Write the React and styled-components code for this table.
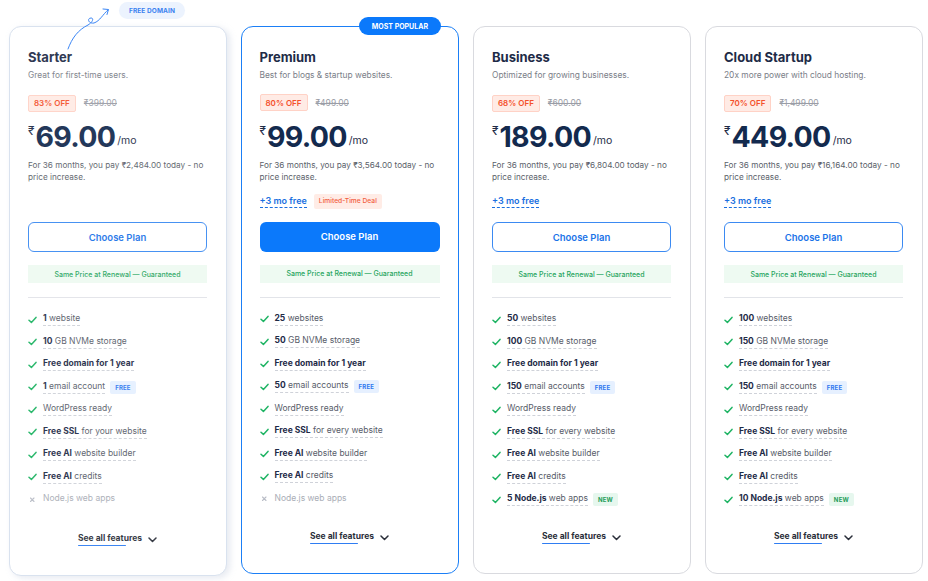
import React from 'react'
import styled, { createGlobalStyle, css } from 'styled-components'

const GlobalStyle = createGlobalStyle`
  html, body {
    margin: 0;
    padding: 0;
    background: #ffffff;
    font-family: "Inter", "Noto Sans", sans-serif;
    -webkit-font-smoothing: antialiased;
  }
`

const plans = [
  {
    name: 'Starter',
    blurb: 'Great for first-time users.',
    off: '83% OFF',
    was: '₹399.00',
    price: '69.00',
    total: '₹2,484.00',
    bonus: null,
    outline: true,
    features: [
      [['1', true], [' website']],
      [['10', true], [' GB NVMe storage']],
      [['Free domain for 1 year', true]],
      [['1', true], [' email account']],
      [['WordPress ready']],
      [['Free SSL', true], [' for your website']],
      [['Free AI', true], [' website builder']],
      [['Free AI', true], [' credits']],
      [['Node.js web apps']],
    ],
    tags: { 3: 'free' },
    missing: 8,
  },
  {
    name: 'Premium',
    blurb: 'Best for blogs & startup websites.',
    off: '80% OFF',
    was: '₹499.00',
    price: '99.00',
    total: '₹3,564.00',
    bonus: true,
    deal: true,
    popular: true,
    features: [
      [['25', true], [' websites']],
      [['50', true], [' GB NVMe storage']],
      [['Free domain for 1 year', true]],
      [['50', true], [' email accounts']],
      [['WordPress ready']],
      [['Free SSL', true], [' for every website']],
      [['Free AI', true], [' website builder']],
      [['Free AI', true], [' credits']],
      [['Node.js web apps']],
    ],
    tags: { 3: 'free' },
    missing: 8,
  },
  {
    name: 'Business',
    blurb: 'Optimized for growing businesses.',
    off: '68% OFF',
    was: '₹600.00',
    price: '189.00',
    total: '₹6,804.00',
    bonus: true,
    outline: true,
    features: [
      [['50', true], [' websites']],
      [['100', true], [' GB NVMe storage']],
      [['Free domain for 1 year', true]],
      [['150', true], [' email accounts']],
      [['WordPress ready']],
      [['Free SSL', true], [' for every website']],
      [['Free AI', true], [' website builder']],
      [['Free AI', true], [' credits']],
      [['5 Node.js', true], [' web apps']],
    ],
    tags: { 3: 'free', 8: 'new' },
  },
  {
    name: 'Cloud Startup',
    blurb: '20x more power with cloud hosting.',
    off: '70% OFF',
    was: '₹1,499.00',
    price: '449.00',
    total: '₹16,164.00',
    bonus: true,
    outline: true,
    features: [
      [['100', true], [' websites']],
      [['150', true], [' GB NVMe storage']],
      [['Free domain for 1 year', true]],
      [['150', true], [' email accounts']],
      [['WordPress ready']],
      [['Free SSL', true], [' for every website']],
      [['Free AI', true], [' website builder']],
      [['Free AI', true], [' credits']],
      [['10 Node.js', true], [' web apps']],
    ],
    tags: { 3: 'free', 8: 'new' },
  },
]

const Check = () => (
  <svg width="9" height="8" viewBox="0 0 9 8">
    <path d="M1 4.3 L3.4 6.4 L8 1.4" fill="none" stroke="#1fb464" strokeWidth="1.5" strokeLinecap="round" strokeLinejoin="round" />
  </svg>
)

const Cross = () => (
  <svg width="9" height="8" viewBox="0 0 9 8">
    <path d="M2.5 2 L6 5.5 M6 2 L2.5 5.5" fill="none" stroke="#b9bdc7" strokeWidth="1.1" strokeLinecap="round" />
  </svg>
)

const Chevron = () => (
  <svg width="9" height="6" viewBox="0 0 9 6">
    <path d="M1 1 L4.5 4.5 L8 1" fill="none" stroke="#2b2f3a" strokeWidth="1.5" strokeLinecap="round" strokeLinejoin="round" />
  </svg>
)

// hand-drawn looping arrow pointing at the domain pill
const Arrow = () => (
  <ArrowSvg width="50" height="52" viewBox="0 0 50 52">
    <path
      d="M2 49 C6 38 12 30 22 25 C27 22 28 18 25 18 C21 18 22 24 28 23 C34 21 37 14 42 10"
      fill="none"
      stroke="#3b86f5"
      strokeWidth="1"
      strokeLinecap="round"
    />
    <path d="M37 9 L42.5 9.5 L41 14.5" fill="none" stroke="#3b86f5" strokeWidth="1" strokeLinecap="round" strokeLinejoin="round" />
  </ArrowSvg>
)

const Feature = ({ parts, tag, missing }) => (
  <Row>
    <Mark>{missing ? <Cross /> : <Check />}</Mark>
    <FeatText missing={missing}>
      {parts.map(([text, bold], i) => bold ? <b key={i}>{text}</b> : <span key={i}>{text}</span>)}
    </FeatText>
    {tag && <Tag kind={tag}>{tag === 'free' ? 'FREE' : 'NEW'}</Tag>}
  </Row>
)

const Plan = ({ plan }) => (
  <Card popular={plan.popular} faded={plan.name === 'Starter'}>
    {plan.popular && <Popular>MOST POPULAR</Popular>}
    <Title>{plan.name}</Title>
    <Blurb>{plan.blurb}</Blurb>
    <DealRow>
      <Off>{plan.off}</Off>
      <Was>{plan.was}</Was>
    </DealRow>
    <PriceRow>
      <Rupee>₹</Rupee>
      <Amount>{plan.price}</Amount>
      <Per>/mo</Per>
    </PriceRow>
    <Terms>For 36 months, you pay {plan.total} today - no price increase.</Terms>
    <BonusRow>
      {plan.bonus && <Bonus>+3 mo free</Bonus>}
      {plan.deal && <Limited>Limited-Time Deal</Limited>}
    </BonusRow>
    <Choose outline={plan.outline}>Choose Plan</Choose>
    <Renewal>Same Price at Renewal — Guaranteed</Renewal>
    <Divider />
    <List>
      {plan.features.map((parts, i) => (
        <Feature key={i} parts={parts} tag={plan.tags[i]} missing={plan.missing === i} />
      ))}
    </List>
    <SeeAll>
      <SeeText>See all features</SeeText>
      <Chevron />
    </SeeAll>
  </Card>
)

export default function App() {
  return (
    <>
      <GlobalStyle />
      <Page>
        <Arrow />
        <DomainPill>FREE DOMAIN</DomainPill>
        <Grid>
          {plans.map(p => <Plan key={p.name} plan={p} />)}
        </Grid>
      </Page>
    </>
  )
}

const Page = styled.div`
  position: relative;
  width: 928px;
  height: 581px;
  box-sizing: border-box;
  padding: 26px 0 0 9px;
  overflow: hidden;
`

const ArrowSvg = styled.svg`
  position: absolute;
  left: 66px;
  top: 0;
  z-index: 2;
`

const DomainPill = styled.div`
  position: absolute;
  left: 119px;
  top: 2px;
  width: 66px;
  height: 17px;
  border-radius: 9px;
  background: #ecf3fe;
  color: #3c82f0;
  font-size: 6.5px;
  font-weight: 700;
  display: flex;
  align-items: center;
  justify-content: center;
  letter-spacing: 0.1px;
`

const Grid = styled.div`
  display: grid;
  grid-template-columns: repeat(4, 218px);
  column-gap: 14px;
  align-items: start;
`

const Card = styled.div`
  position: relative;
  box-sizing: border-box;
  height: 548px;
  padding: 22px 19px 0 18px;
  border-radius: 12px;
  background: #fff;
  border: 1px solid #d9dadf;
  display: flex;
  flex-direction: column;
  ${({ popular }) => popular && css`
    border: 1.5px solid #1b7ff6;
    padding: 21.5px 18.5px 0 17.5px;
  `}
  ${({ faded }) => faded && css`
    height: 550px;
    border-color: #d7e0ee;
    box-shadow: 3px 2px 6px rgba(180, 192, 215, 0.35);
    opacity: 0.93;
  `}
`

const Popular = styled.div`
  position: absolute;
  right: 17px;
  top: -10px;
  height: 18px;
  padding: 0 13px;
  border-radius: 9px;
  background: #0b79fb;
  color: #fff;
  font-size: 7px;
  font-weight: 700;
  display: flex;
  align-items: center;
`

const Title = styled.div`
  font-size: 13px;
  line-height: 17px;
  font-weight: 700;
  color: #1e2b47;
`

const Blurb = styled.div`
  margin-top: 3px;
  font-size: 8.4px;
  line-height: 12px;
  color: #7a7e88;
`

const DealRow = styled.div`
  margin-top: 13px;
  display: flex;
  align-items: center;
  gap: 8px;
  height: 18px;
`

const Off = styled.div`
  height: 17px;
  box-sizing: border-box;
  padding: 0 5px;
  border: 1px solid #ffd2c6;
  background: #ffebe5;
  border-radius: 2px;
  color: #f4512c;
  font-size: 8px;
  font-weight: 600;
  display: flex;
  align-items: center;
`

const Was = styled.div`
  font-size: 8.5px;
  color: #9a9da6;
  text-decoration: line-through;
`

const PriceRow = styled.div`
  margin-top: 8px;
  display: flex;
  align-items: flex-end;
  height: 33px;
`

const Rupee = styled.span`
  align-self: flex-start;
  margin-top: 3px;
  font-size: 12px;
  color: #1e2b47;
  margin-right: 1px;
`

const Amount = styled.span`
  font-size: 28.5px;
  line-height: 33px;
  font-weight: 700;
  letter-spacing: -0.7px;
  color: #132a4e;
`

const Per = styled.span`
  font-size: 10.5px;
  line-height: 12px;
  margin: 0 0 6px 2px;
  color: #1e2b47;
`

const Terms = styled.div`
  margin-top: 6px;
  font-size: 8.2px;
  line-height: 12px;
  color: #5b5f6a;
  width: 180px;
`

const BonusRow = styled.div`
  margin-top: 10px;
  height: 17px;
  display: flex;
  align-items: center;
  gap: 7px;
`

const Bonus = styled.span`
  font-size: 9px;
  font-weight: 600;
  color: #1a6fe0;
  border-bottom: 1px dashed #1a6fe0;
  line-height: 12px;
`

const Limited = styled.span`
  height: 15px;
  padding: 0 5px;
  border-radius: 2px;
  background: #ffece6;
  color: #f2603f;
  font-size: 6.7px;
  font-weight: 500;
  display: flex;
  align-items: center;
`

const Choose = styled.div`
  margin-top: 12px;
  height: 30px;
  box-sizing: border-box;
  border-radius: 6px;
  display: flex;
  align-items: center;
  justify-content: center;
  font-size: 9.5px;
  font-weight: 600;
  background: #0b79fb;
  color: #fff;
  ${({ outline }) => outline && css`
    background: #fff;
    color: #1a73e8;
    border: 1.5px solid #3b8af2;
  `}
`

const Renewal = styled.div`
  margin-top: 13px;
  height: 18px;
  background: #eefaf2;
  color: #27a55e;
  font-size: 7px;
  font-weight: 500;
  display: flex;
  align-items: center;
  justify-content: center;
`

const Divider = styled.div`
  margin-top: 14px;
  height: 1px;
  background: #e2e4e9;
`

const List = styled.div`
  margin-top: 14px;
  display: flex;
  flex-direction: column;
  gap: 7.5px;
`

const Row = styled.div`
  display: flex;
  align-items: center;
  height: 15px;
`

const Mark = styled.span`
  width: 15px;
  display: flex;
  align-items: center;
`

const FeatText = styled.span`
  font-size: 8.5px;
  line-height: 11px;
  color: #575c69;
  border-bottom: 1px dashed #cfd2d9;
  padding-bottom: 1px;
  b {
    font-weight: 700;
    color: #1e2b47;
  }
  ${({ missing }) => missing && css`
    color: #a9adb6;
    border-bottom-color: transparent;
  `}
`

const Tag = styled.span`
  margin-left: 5px;
  height: 13px;
  padding: 0 5px;
  border-radius: 2px;
  font-size: 6px;
  font-weight: 700;
  display: flex;
  align-items: center;
  letter-spacing: 0.2px;
  ${({ kind }) => kind === 'free' ? css`
    background: #e6f0ff;
    color: #2f78ef;
  ` : css`
    background: #e6f7ee;
    color: #1f9d59;
  `}
`

const SeeAll = styled.div`
  margin-top: auto;
  margin-bottom: 29px;
  align-self: center;
  display: flex;
  align-items: center;
  gap: 6px;
`

const SeeText = styled.span`
  position: relative;
  font-size: 8.5px;
  font-weight: 700;
  color: #2b2f3a;
  padding-bottom: 3px;
  &::after {
    content: '';
    position: absolute;
    left: 0;
    bottom: 0;
    width: 75%;
    height: 1.5px;
    border-radius: 1px;
    background: #2f7df2;
  }
`
